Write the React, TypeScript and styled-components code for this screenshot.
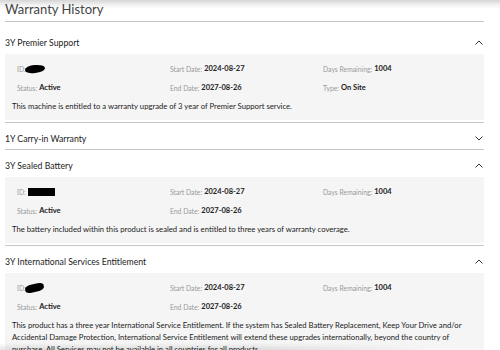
import React from "react";
import styled, { createGlobalStyle } from "styled-components";

const GlobalStyle = createGlobalStyle`
  html, body {
    margin: 0;
    padding: 0;
  }
  body {
    font-family: Lato, "Open Sans", sans-serif;
    color: #222;
    background: #fff linear-gradient(#d6d6d6 0px, #f2f2f2 5px, #fff 9px) no-repeat;
    background-size: 100% 12px;
  }
`;

//#region Styles
const Page = styled.div`
  width: 479px;
  padding-left: 5px;
  height: 350px;
  overflow: hidden;
  position: relative;
`;

// soft shadow the screenshot picked up along its bottom edge
const BottomShade = styled.div`
  position: absolute;
  left: 0;
  bottom: 0;
  width: 430px;
  height: 7px;
  background: linear-gradient(transparent, rgba(0, 0, 0, 0.1));
  -webkit-mask-image: linear-gradient(90deg, #000 60%, transparent);
  mask-image: linear-gradient(90deg, #000 60%, transparent);
  pointer-events: none;
`;

const Title = styled.h1`
  margin: 0 0 5px;
  height: 22px;
  padding-top: 1px;
  box-sizing: border-box;
  font-size: 13px;
  font-weight: 400;
  line-height: 17px;
  color: #444;
  border-bottom: 1px solid #c4c4c4;
`;

const Section = styled.section<{ open: boolean }>`
  border-bottom: 1px solid #c8c8c8;
  padding-bottom: ${(p) => (p.open ? "2px" : "0")};
`;

const Header = styled.div<{ open: boolean }>`
  height: ${(p) => (p.open ? "27px" : "26px")};
  padding-top: 10px;
  box-sizing: border-box;
  display: flex;
  align-items: flex-start;
  justify-content: space-between;
  font-size: 8.7px;
  line-height: 12px;
  color: #222;
  padding-right: 1px;
`;

const Chevron = styled.svg`
  width: 8px;
  height: 5px;
  margin-top: 3px;
  color: #333;
`;

const Panel = styled.div`
  background: #f5f5f5;
  padding: 5px 7px 8px;
`;

const Grid = styled.div`
  display: grid;
  grid-template-columns: 153px 153px 1fr;
  padding-left: 5px;
`;

const Cell = styled.div`
  height: 19px;
  display: flex;
  align-items: center;
  white-space: nowrap;
`;

const Label = styled.span`
  font-size: 6.8px;
  color: #9a9a9a;
`;

const Value = styled.span`
  font-size: 7.5px;
  font-weight: 700;
  color: #222;
  margin-left: 2px;
`;

const Redacted = styled.span<{ w: number; tilt: number; radius: string }>`
  display: inline-block;
  width: ${(p) => p.w}px;
  height: 8px;
  background: #000;
  border-radius: ${(p) => p.radius};
  transform: rotate(${(p) => p.tilt}deg);
  margin-left: ${(p) => (p.radius === "0" ? "2px" : "-1px")};
`;

const Desc = styled.p`
  margin: 3px 0 0;
  font-size: 7.7px;
  line-height: 12px;
  color: #222;
`;
//#endregion

type Field = { label: string; value?: React.ReactNode };

type Warranty = {
  name: string;
  open: boolean;
  fields?: Field[];
  text?: string;
};

const blob = (w: number, tilt: number, radius: string) => (
  <Redacted w={w} tilt={tilt} radius={radius} />
);

const warranties: Warranty[] = [
  {
    name: "3Y Premier Support",
    open: true,
    fields: [
      { label: "ID", value: blob(20, -4, "50% 45% 50% 40%") },
      { label: "Start Date", value: "2024-08-27" },
      { label: "Days Remaining", value: "1004" },
      { label: "Status", value: "Active" },
      { label: "End Date", value: "2027-08-26" },
      { label: "Type", value: "On Site" },
    ],
    text: "This machine is entitled to a warranty upgrade of 3 year of Premier Support service.",
  },
  { name: "1Y Carry-in Warranty", open: false },
  {
    name: "3Y Sealed Battery",
    open: true,
    fields: [
      { label: "ID", value: blob(27, 0, "0") },
      { label: "Start Date", value: "2024-08-27" },
      { label: "Days Remaining", value: "1004" },
      { label: "Status", value: "Active" },
      { label: "End Date", value: "2027-08-26" },
    ],
    text: "The battery included within this product is sealed and is entitled to three years of warranty coverage.",
  },
  {
    name: "3Y International Services Entitlement",
    open: true,
    fields: [
      { label: "ID", value: blob(19, -12, "40% 30% 40% 30%") },
      { label: "Start Date", value: "2024-08-27" },
      { label: "Days Remaining", value: "1004" },
      { label: "Status", value: "Active" },
      { label: "End Date", value: "2027-08-26" },
    ],
    text: "This product has a three year International Service Entitlement. If the system has Sealed Battery Replacement, Keep Your Drive and/or Accidental Damage Protection, International Service Entitlement will extend these upgrades internationally, beyond the country of purchase. All Services may not be available in all countries for all products.",
  },
];

const Arrow = ({ up }: { up: boolean }) => (
  <Chevron viewBox="0 0 8 5" fill="none">
    <path
      d={up ? "M0.5 4.5 L4 1 L7.5 4.5" : "M0.5 0.5 L4 4 L7.5 0.5"}
      stroke="currentColor"
      strokeWidth="1"
    />
  </Chevron>
);

const WarrantyItem = ({ item }: { item: Warranty }) => (
  <Section open={item.open}>
    <Header open={item.open}>
      <span>{item.name}</span>
      <Arrow up={item.open} />
    </Header>
    {item.open && (
      <Panel>
        <Grid>
          {item.fields?.map((f) => (
            <Cell key={f.label}>
              <Label>{f.label}:</Label>
              {f.label === "ID" ? f.value : <Value>{f.value}</Value>}
            </Cell>
          ))}
        </Grid>
        <Desc>{item.text}</Desc>
      </Panel>
    )}
  </Section>
);

export default function App() {
  return (
    <Page>
      <GlobalStyle />
      <Title>Warranty History</Title>
      {warranties.map((w) => (
        <WarrantyItem key={w.name} item={w} />
      ))}
      <BottomShade />
    </Page>
  );
}
